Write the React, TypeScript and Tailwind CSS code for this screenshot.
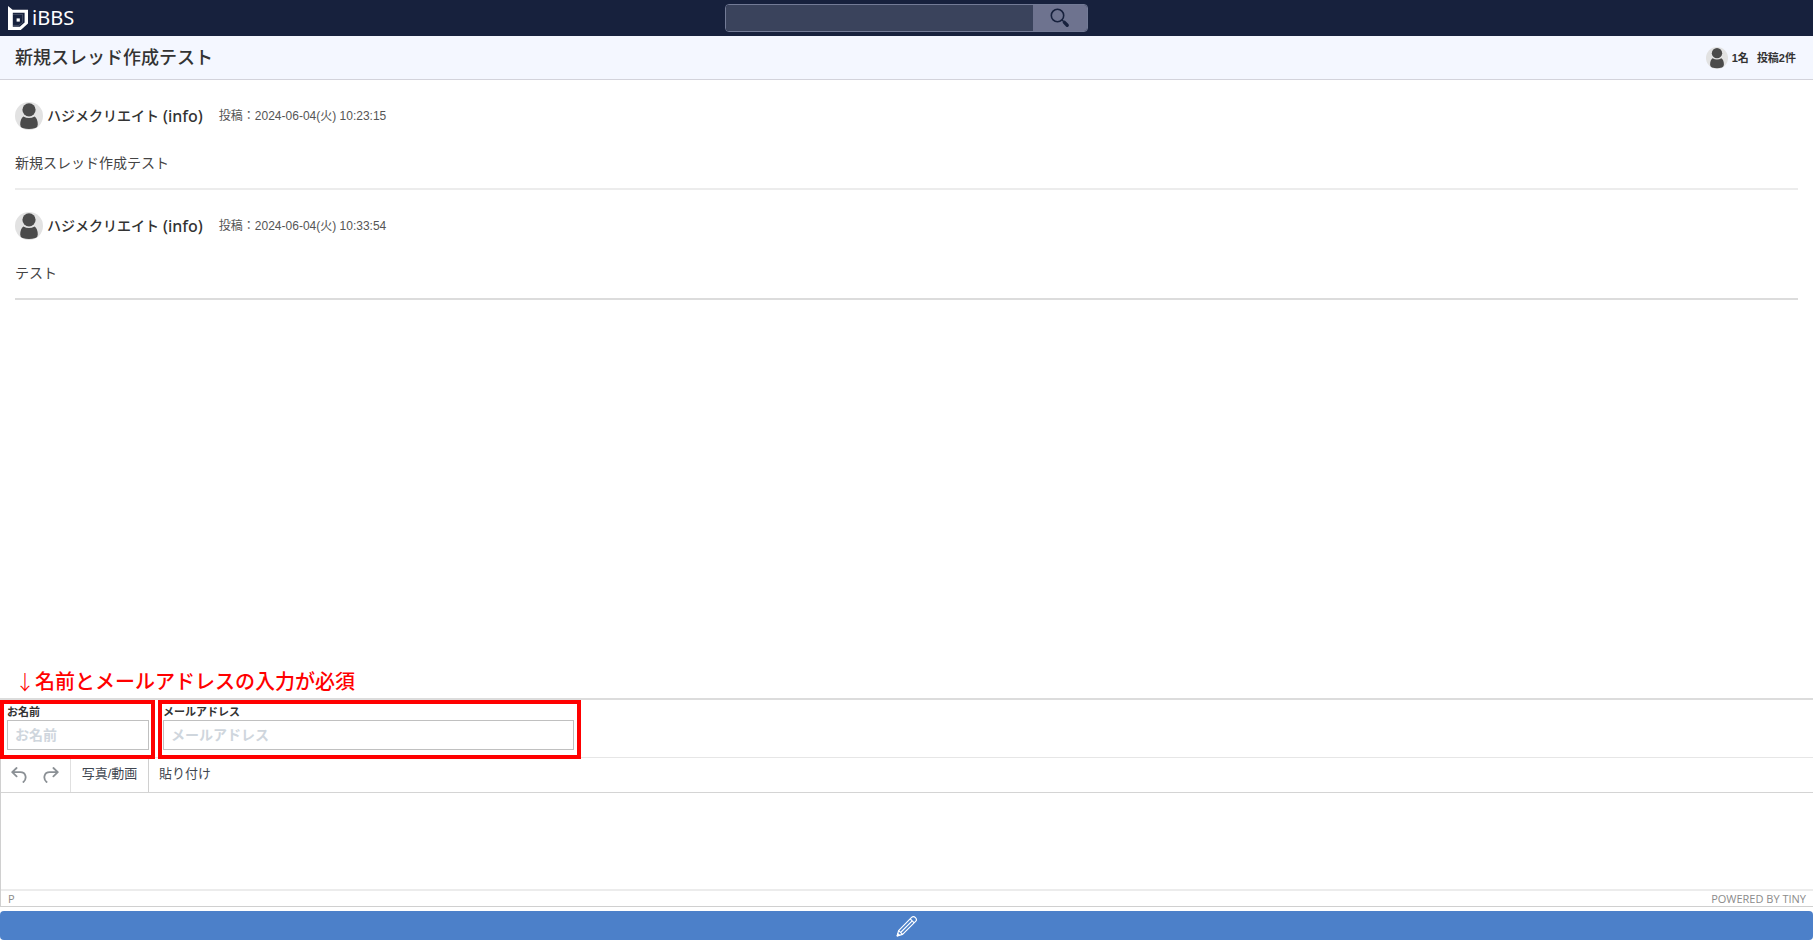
import React from "react";

type Post = { id: number; author: string; date: string; body: string };

const posts: Post[] = [
  { id: 1, author: "ハジメクリエイト", date: "2024-06-04(火) 10:23:15", body: "新規スレッド作成テスト" },
  { id: 2, author: "ハジメクリエイト", date: "2024-06-04(火) 10:33:54", body: "テスト" },
];

function Avatar({ className }: { className: string }) {
  return (
    <svg viewBox="0 0 28 28" className={className} aria-hidden="true">
      <circle cx="14" cy="14" r="14" fill="#e2e2e2" />
      <circle cx="14" cy="7.8" r="6.6" fill="#4b4b4b" />
      <path d="M8.4 14.4 Q14 17.6 19.6 14.4 Q22.6 16.4 22.8 22.4 Q22.9 25 20.4 26 Q14 27.8 7.6 26 Q5.1 25 5.2 22.4 Q5.4 16.4 8.4 14.4Z" fill="#4b4b4b" />
    </svg>
  );
}

function LogoMark() {
  return (
    <svg viewBox="0 0 20 24" className="h-6 w-5" aria-hidden="true">
      <path fillRule="evenodd" d="M0 0 L4.6 3.8 H20 V17.4 L12.8 24 H0Z M4.8 6.8 V20.8 H11.8 L16.6 16.4 V6.8Z" fill="#fff" />
      <path d="M5 8.4 H14.6 V16.4 L10.8 19.4 H5" fill="none" stroke="#fff" strokeWidth="0.5" opacity="0.4" />
      <rect x="8.6" y="12.4" width="3.2" height="3.2" fill="#fff" />
    </svg>
  );
}

function SearchIcon() {
  return (
    <svg viewBox="0 0 20 20" className="h-5 w-5" fill="none" stroke="#17213d" aria-hidden="true">
      <circle cx="7.5" cy="7.5" r="6.2" strokeWidth="1.6" />
      <path d="M12 12 L13.6 13.6" strokeWidth="1.4" />
      <path d="M14.4 14.4 L17.2 17.2" strokeWidth="3.4" strokeLinecap="round" />
    </svg>
  );
}

function UndoIcon({ className = "" }: { className?: string }) {
  return (
    <svg viewBox="0 0 16 16" className={"h-4 w-4 " + className} fill="none" stroke="#8b9095" strokeWidth="1.8" strokeLinecap="round" strokeLinejoin="round" aria-hidden="true">
      <path d="M5.6 1 L1.2 5.2 L5.6 9.4 M1.6 5.2 H9.2 C15.4 5.2 16 12 12.4 15" />
    </svg>
  );
}

function PencilIcon() {
  return (
    <svg viewBox="0 0 22 22" className="h-[22px] w-[22px]" fill="none" stroke="#fff" strokeWidth="1.2" strokeLinejoin="round" aria-hidden="true">
      <path d="M1.2 20.8 L2.6 15.6 L15.6 2.4 Q17.4 0.6 19.4 2.6 Q21.4 4.6 19.6 6.4 L6.6 19.4Z" />
      <path d="M2.6 15.6 L6.6 19.4 M14.2 3.8 L18.2 7.8 M4.6 17.5 L16.2 5.8" />
      <path d="M1.2 20.8 L1.8 18.6 L3.4 20.2Z" fill="#fff" />
    </svg>
  );
}

const inputClass =
  "h-[30px] w-full border border-[#c0c0c0] bg-white px-[7px] text-sm font-bold text-[#333] outline-none placeholder:text-[#cfd6dd]";

export default function App() {
  return (
    <div className="flex min-h-screen flex-col bg-white pb-px font-['Liberation_Sans','Noto_Sans_CJK_JP',sans-serif] text-[#333]">
      <header className="grid h-9 grid-cols-[1fr_20%_1fr] items-center bg-[#17213d]">
        <a href="#" className="flex items-center gap-1 pl-2 font-['Noto_Sans',sans-serif] text-xl leading-9 text-white">
          <LogoMark />
          <span>iBBS</span>
        </a>
        <form className="flex h-7 overflow-hidden rounded border border-[#737b96]">
          <input type="search" aria-label="検索" className="min-w-0 flex-1 bg-[#3a435c] px-2 text-sm text-white outline-none" />
          <button type="button" aria-label="検索する" className="flex w-[54px] items-center justify-center bg-[#6e738f]">
            <SearchIcon />
          </button>
        </form>
      </header>

      <div className="flex h-11 items-center justify-between border-b border-[#d3d3db] bg-[#f4f7ff] pt-px pr-[17px] pl-[15px]">
        <h1 className="text-lg font-medium">新規スレッド作成テスト</h1>
        <div className="flex items-center text-[11px] font-bold">
          <Avatar className="mr-1 h-[22px] w-[22px]" />
          <span className="mr-2">1名</span>
          <span>投稿2件</span>
        </div>
      </div>

      <main className="flex flex-1 flex-col px-[15px]">
        {posts.map((post) => (
          <article key={post.id} className="border-b-2 border-[#ececec] pt-[22px] pb-[15px] last-of-type:border-[#dcdcdc]">
            <div className="flex h-7 items-center">
              <Avatar className="mr-1 h-7 w-7" />
              <h2 className="mr-4 flex items-center gap-1 text-sm font-medium">
                <span>{post.author}</span>
                <span className="font-['Noto_Sans',sans-serif] text-base">(info)</span>
              </h2>
              <p className="text-xs text-[#555]">
                投稿：<time>{post.date}</time>
              </p>
            </div>
            <p className="mt-[23px] text-sm leading-5 text-[#444]">{post.body}</p>
          </article>
        ))}
        <p className="mt-auto flex pb-px text-xl leading-[30px] font-medium text-[#ff0000]">
          <span className="font-['Noto_Sans_CJK_JP',sans-serif] font-light">↓</span>
          <span>名前とメールアドレスの入力が必須</span>
        </p>
      </main>

      <section>
        <div className="flex h-[60px] gap-[3px] border-t-2 border-b border-t-[#dcdcdc] border-b-[#e6e6e6]">
          <div className="relative h-[59px] w-[155px] border-4 border-[#ff0000] pr-0.5 pl-[3px]">
            <label htmlFor="name" className="block text-[11px] leading-4 font-bold">お名前</label>
            <input id="name" type="text" placeholder="お名前" className={inputClass} />
          </div>
          <div className="relative h-[59px] w-[423px] border-4 border-[#ff0000] pr-[3px] pl-px">
            <label htmlFor="mail" className="block text-[11px] leading-4 font-bold">メールアドレス</label>
            <input id="mail" type="email" placeholder="メールアドレス" className={inputClass} />
          </div>
        </div>

        <div className="border-b border-l border-[#d0d0d0]">
          <div className="flex h-[35px] border-b border-[#d4d4d4] text-[13px] text-[#3f4650]">
            <div className="flex w-[70px] items-center gap-4 border-r border-[#e0e0e0] pl-[10px]">
              <button type="button" aria-label="元に戻す"><UndoIcon /></button>
              <button type="button" aria-label="やり直す"><UndoIcon className="-scale-x-100" /></button>
            </div>
            <button type="button" className="w-[78px] border-r border-[#d0d0d0] pb-0.5">写真/動画</button>
            <button type="button" className="px-[10px] pb-0.5">貼り付け</button>
          </div>
          <textarea aria-label="本文" className="block h-24 w-full resize-none px-4 py-2 text-sm outline-none" />
          <div className="flex h-[17px] items-center justify-between border-t-2 border-[#ececec] px-[7px] font-['Open_Sans',sans-serif] text-[11px] leading-none text-[#8b8b8b]">
            <span>P</span>
            <a href="#">POWERED BY TINY</a>
          </div>
        </div>

        <button type="button" aria-label="投稿する" className="mt-1 flex h-[29px] w-full items-center justify-center rounded bg-[#4c80c9]">
          <PencilIcon />
        </button>
      </section>
    </div>
  );
}
